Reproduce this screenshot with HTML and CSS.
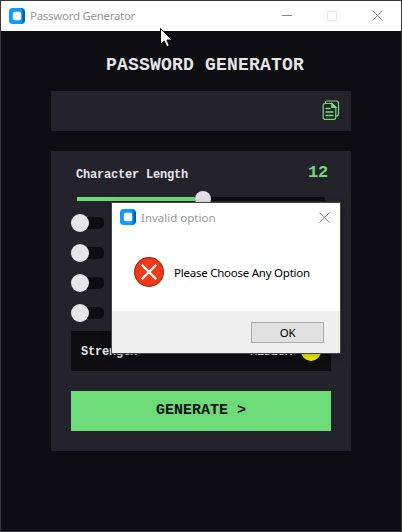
FILE: index.html
```html
<!DOCTYPE html>
<html lang="en">
<head>
<meta charset="utf-8">
<title>Password Generator</title>
<link rel="stylesheet" href="styles.css">
</head>
<body>
<div class="window">
  <header class="titlebar">
    <svg class="app-icon" width="16" height="16" viewBox="0 0 16 16"><rect width="16" height="16" rx="3.500" fill="#0a9cff"/><path d="M12 0h.5L16 3.500v9L12.500 16H12l1.300-3V3z" fill="#0560b0"/><rect x="3.800" y="3.800" width="8.400" height="8.400" rx="2" fill="#fff"/></svg>
    <span class="title app-title">Password Generator</span>
    <div class="controls">
      <svg width="10" height="11" viewBox="0 0 10 11"><path d="M0 5.5h10" stroke="#8a8a8a"/></svg>
      <svg width="10" height="10" viewBox="0 0 10 10"><rect x=".5" y=".5" width="9" height="9" fill="none" stroke="#e6e6e6"/></svg>
      <svg width="11" height="11" viewBox="0 0 11 11"><path d="M.5.5l10 10M10.500.5l-10 10" stroke="#858585"/></svg>
    </div>
  </header>
  <main class="content">
    <h1 class="heading">PASSWORD GENERATOR</h1>
    <section class="output">
      <svg width="18" height="21" viewBox="0 0 18 21" fill="none" stroke="#6edb79" stroke-width="1.2"><path d="M3.500 3.200V2.500Q3.500 1 5 1H14.500Q16.500 1 16.500 3V14Q16.500 16 14 16.200"/><path d="M3 3.500H10L13.800 7.300V17.500Q13.800 19.400 12 19.400H3Q1.200 19.400 1.200 17.500V5.300Q1.200 3.500 3 3.500z"/><path d="M9.800 3.500V7.400H13.800z" fill="#6edb79"/><path d="M3.500 8.500H8.500M3.500 12H11.500M3.500 15.500H11.500" stroke-width="1.300"/></svg>
    </section>
    <section class="panel">
      <div class="length-row"><span class="label">Character Length</span><span class="length">12</span></div>
      <div class="slider"><div class="fill"></div><div class="knob"></div></div>
      <div class="toggles">
        <div class="toggle"></div><div class="toggle"></div><div class="toggle"></div><div class="toggle"></div>
      </div>
      <div class="strength"><span class="label">Strength</span><span class="label level">MEDIUM</span><span class="dot"></span></div>
      <button class="generate">GENERATE &gt;</button>
    </section>
  </main>
</div>
<div class="dialog">
  <div class="dialog-title">
    <svg class="app-icon" width="16" height="16" viewBox="0 0 16 16"><rect width="16" height="16" rx="3.500" fill="#0a9cff"/><path d="M12 0h.5L16 3.500v9L12.500 16H12l1.300-3V3z" fill="#0560b0"/><rect x="3.800" y="3.800" width="8.400" height="8.400" rx="2" fill="#fff"/></svg>
    <span class="title dialog-name">Invalid option</span>
    <svg class="dialog-close" width="11" height="11" viewBox="0 0 11 11"><path d="M.5.5l10 10M10.500.5l-10 10" stroke="#858585"/></svg>
  </div>
  <div class="dialog-body">
    <svg width="30" height="30" viewBox="0 0 30 30"><circle cx="15" cy="15" r="14.400" fill="#f03a17" stroke="#a52a16" stroke-width="1.200"/><path d="M7.700 7.700l14.600 14.600M22.300 7.700L7.700 22.300" stroke="#fff" stroke-width="2.300"/></svg>
    <span class="message">Please Choose Any Option</span>
  </div>
  <div class="dialog-footer"><button class="ok">OK</button></div>
</div>
<svg class="cursor" width="13" height="21" viewBox="0 0 13 21"><path d="M.5.500V16.500L4.200 13L6.700 18.700L9.300 17.600L6.900 12H12z" fill="#fff" stroke="#0d0d12"/></svg>
</body>
</html>
```
FILE: styles.css
```css
* { box-sizing: border-box; }
body { margin: 0; position: relative; width: 402px; height: 532px; overflow: hidden; font-family: "Noto Sans", sans-serif; }
button { border: 0; padding: 0; display: block; }
svg { display: block; flex: none; }
.window { height: 532px; border: 1px solid #3a3a3e; background: #0d0d12; }
.titlebar { height: 30px; background: #fff; display: flex; align-items: center; padding: 0 18px 1px 8px; }
.title { font-size: 11.5px; line-height: 16px; color: #999; white-space: nowrap; padding-top: 1px; }
.app-title { margin-left: 5px; letter-spacing: -0.29px; }
.controls { margin-left: auto; display: flex; align-items: center; gap: 35px; }
.content { padding: 0 50px; }
.heading { margin: 0; height: 60px; padding: 24px 0 0 8px; font: bold 18px/20px "Liberation Mono", monospace; letter-spacing: 0.2px; color: #e6e5ea; text-align: center; white-space: nowrap; }
.output { height: 40px; background: #24232b; display: flex; justify-content: flex-end; padding: 9px 11px 0 0; }
.panel { margin-top: 20px; height: 300px; padding: 0 20px; background: #24232b; }
.length-row { height: 46px; display: flex; justify-content: space-between; padding: 0 3px 0 5px; }
.label { font: bold 12px/14px "Liberation Mono", monospace; letter-spacing: -0.2px; color: #e6e5ea; }
.length-row .label { padding-top: 17px; }
.length { font: bold 17px/20px "Liberation Mono", monospace; letter-spacing: -0.2px; padding-top: 12px; color: #6edb79; }
.slider { width: 248px; height: 4px; margin-left: 6px; background: #0d0d12; display: flex; align-items: center; }
.fill { width: 118px; height: 4px; background: #6edb79; }
.knob { width: 16px; height: 16px; flex: none; border-radius: 50%; background: #e2e1e6; }
.toggles { height: 130px; padding-top: 13px; display: grid; grid-template-rows: repeat(4, 18px); gap: 12px; }
.toggle { width: 33px; height: 18px; display: flex; align-items: center; }
.toggle::before { content: ""; width: 18px; height: 18px; border-radius: 50%; background: #e6e5ea; z-index: 1; }
.toggle::after { content: ""; width: 24px; height: 12px; margin-left: -9px; border-radius: 0 5px 5px 0; background: #0d0d12; }
.strength { height: 40px; background: #0d0d12; display: flex; align-items: center; padding: 0 10px; }
.strength .label { padding-top: 2px; }
.level { margin-left: auto; }
.dot { width: 20px; height: 20px; margin-left: 9px; border-radius: 50%; background: #f5f500; }
.generate { width: 260px; height: 40px; margin-top: 20px; padding-bottom: 1px; background: #6edb79; color: #121217; font: bold 15px/18px "Liberation Mono", monospace; }
.dialog { position: absolute; left: 111px; top: 202px; width: 230px; height: 152px; border: 1px solid #46454b; background: #fff; box-shadow: 1px 3px 9px rgba(0,0,0,.25); }
.dialog-title { height: 29px; padding: 0 10px 1px 8px; display: flex; align-items: center; }
.dialog-name { margin-left: 5px; padding-top: 2px; }
.dialog-close { margin-left: auto; }
.dialog-body { height: 79px; padding: 25px 0 0 22px; display: flex; align-items: flex-start; }
.message { margin-left: 10px; padding-top: 8px; font-size: 11.5px; line-height: 16px; letter-spacing: -0.24px; color: #000; white-space: nowrap; }
.dialog-footer { height: 42px; padding: 11px 16px 0 0; background: #efefef; display: flex; justify-content: flex-end; }
.ok { width: 73px; height: 21px; border: 1px solid #aaa; background: #e1e1e1; font: 11.500px/16px "Noto Sans", sans-serif; color: #000; letter-spacing: -0.3px; }
.cursor { position: absolute; left: 160px; top: 28px; }
```
